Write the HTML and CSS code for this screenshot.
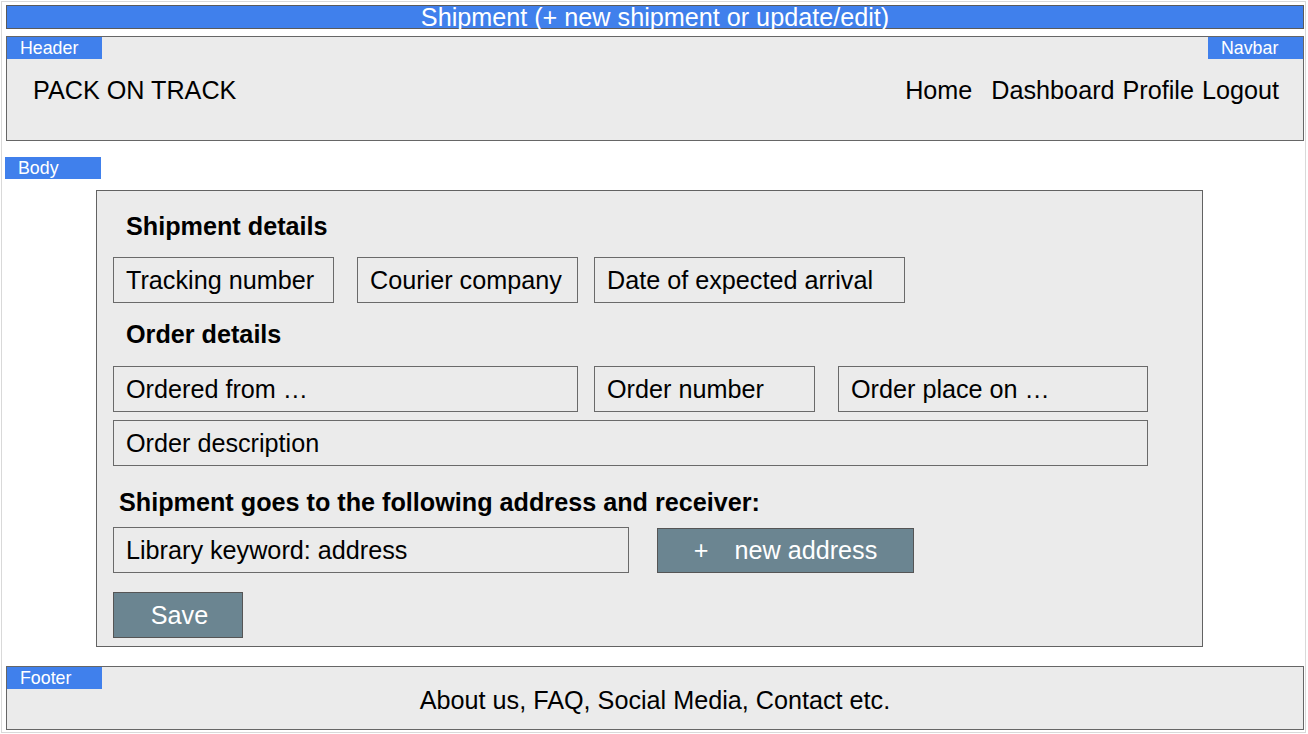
FILE: index.html
```html
<!DOCTYPE html>
<html lang="en">
<head>
<meta charset="utf-8">
<title>Shipment</title>
<link rel="stylesheet" href="styles.css">
</head>
<body>
<div class="frame">
  <div class="titlebar">Shipment (+ new shipment or update/edit)</div>

  <header class="header">
    <span class="badge badge-left">Header</span>
    <span class="badge badge-right">Navbar</span>
    <div class="brand">PACK ON TRACK</div>
    <nav class="nav">
      <span class="nav-home">Home</span>
      <span>Dashboard</span>
      <span>Profile</span>
      <span>Logout</span>
    </nav>
  </header>

  <div class="body-label">Body</div>

  <main class="panel">
    <h2 class="heading">Shipment details</h2>
    <div class="row">
      <div class="field f-tracking">Tracking number</div>
      <div class="field f-courier">Courier company</div>
      <div class="field f-date">Date of expected arrival</div>
    </div>

    <h2 class="heading heading-order">Order details</h2>
    <div class="row">
      <div class="field f-from">Ordered from …</div>
      <div class="field f-number">Order number</div>
      <div class="field f-placed">Order place on …</div>
    </div>
    <div class="row row-desc">
      <div class="field f-desc">Order description</div>
    </div>

    <h2 class="heading heading-address">Shipment goes to the following address and receiver:</h2>
    <div class="row row-address">
      <div class="field f-library">Library keyword: address</div>
      <div class="btn btn-new"><span>+</span><span>new address</span></div>
    </div>

    <div class="btn btn-save">Save</div>
  </main>

  <footer class="footer">
    <span class="badge badge-left">Footer</span>
    <div class="footer-text">About us, FAQ, Social Media, Contact etc.</div>
  </footer>
</div>
</body>
</html>
```

FILE: styles.css
```css
* {
  box-sizing: border-box;
}

html, body {
  margin: 0;
  padding: 0;
  background: #ffffff;
}

body {
  font-family: "Liberation Sans", Arial, sans-serif;
  font-size: 25.2px;
  color: #000000;
}

.frame {
  margin: 1px 0 0 1px;
  width: 1305px;
  height: 732px;
  border: 1px solid #d9d9d9;
  padding: 3px 0 0 4px;
  display: flex;
  flex-direction: column;
}

.titlebar {
  width: 1298px;
  height: 24px;
  background: #4080ec;
  border: 1px solid #5a5a5a;
  color: #ffffff;
  font-size: 25.2px;
  line-height: 22px;
  text-align: center;
  white-space: nowrap;
}

.header {
  position: relative;
  margin-top: 7px;
  width: 1298px;
  height: 105px;
  background: #ebebeb;
  border: 1px solid #666666;
  display: flex;
  align-items: center;
  justify-content: space-between;
  padding: 2px 24px 0 26px;
  line-height: 30px;
}

.badge {
  position: absolute;
  top: 0;
  width: 95px;
  height: 22px;
  background: #4080ec;
  color: #ffffff;
  font-size: 17.8px;
  line-height: 22px;
  padding-left: 13px;
}

.badge-left {
  left: 0;
}

.badge-right {
  right: 0;
}

.nav {
  display: flex;
  gap: 8px;
}

.nav-home {
  margin-right: 11px;
}

.body-label {
  margin: 16px 0 0 -1px;
  width: 96px;
  height: 22px;
  background: #4080ec;
  color: #ffffff;
  font-size: 17.8px;
  line-height: 23px;
  padding-left: 13px;
}

.panel {
  margin: 11px 0 0 90px;
  width: 1107px;
  height: 457px;
  background: #ebebeb;
  border: 1px solid #626262;
  padding: 20px 0 0 16px;
}

.heading {
  margin: 0 0 16px 13px;
  font-size: 25.2px;
  font-weight: bold;
  line-height: 30px;
}

.heading-order {
  margin-top: 16px;
  margin-bottom: 17px;
}

.heading-address {
  margin: 21px 0 10px 6px;
}

.row {
  display: flex;
  align-items: center;
}

.row-desc {
  margin-top: 8px;
}

.field {
  height: 46px;
  border: 1px solid #6a6a6a;
  background: #ebebeb;
  padding: 0 0 0 12px;
  line-height: 44px;
  white-space: nowrap;
}

.f-tracking { width: 221px; }
.f-courier { width: 221px; margin-left: 23px; }
.f-date { width: 311px; margin-left: 16px; }
.f-from { width: 465px; }
.f-number { width: 221px; margin-left: 16px; }
.f-placed { width: 310px; margin-left: 23px; }
.f-desc { width: 1035px; }
.f-library { width: 516px; }

.btn {
  background: #6b8591;
  border: 1px solid #555555;
  color: #ffffff;
  display: flex;
  align-items: center;
  justify-content: center;
  white-space: nowrap;
}

.btn-new {
  width: 257px;
  height: 45px;
  margin-left: 28px;
  gap: 26px;
}

.btn-save {
  margin-top: 19px;
  width: 130px;
  height: 46px;
  padding-left: 3px;
}

.footer {
  position: relative;
  margin-top: 19px;
  width: 1298px;
  height: 64px;
  background: #ebebeb;
  border: 1px solid #666666;
  display: flex;
  align-items: center;
  justify-content: center;
  padding-top: 3px;
  line-height: 30px;
}
```
